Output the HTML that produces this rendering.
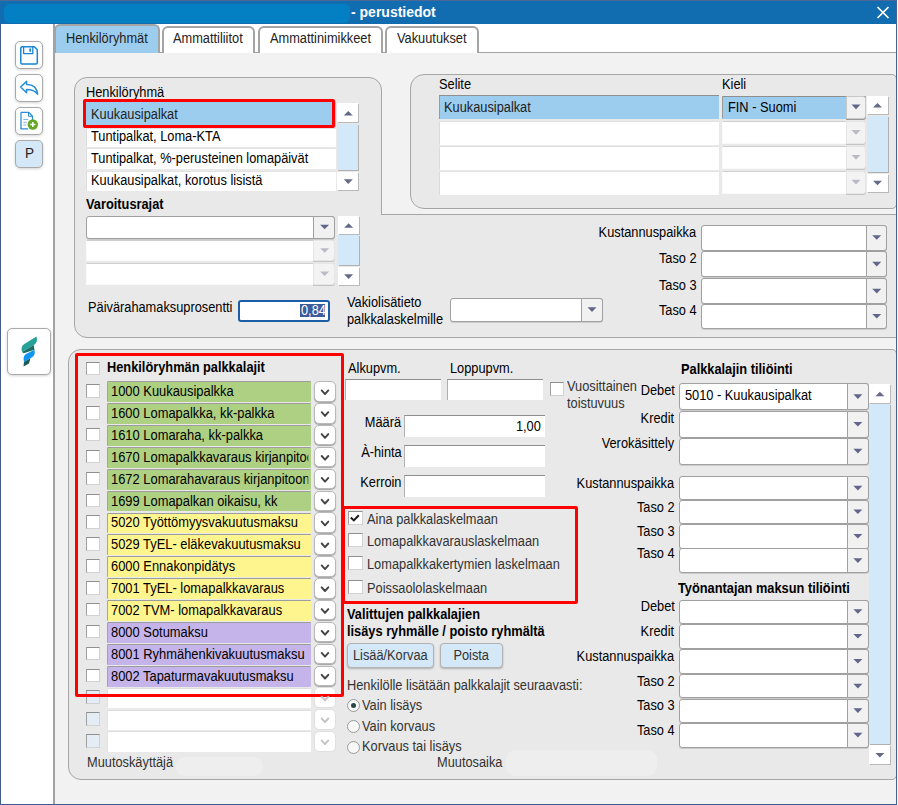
<!DOCTYPE html>
<html lang="fi"><head><meta charset="utf-8"><title>perustiedot</title><style>
html,body{margin:0;padding:0;}
body{width:898px;height:805px;overflow:hidden;position:relative;background:#fff;font-family:"Liberation Sans",sans-serif;font-size:13.8px;color:#000;}
.a,.t,.tab,.tbtn,.lrow,.red,.combo,.cbtn,.sbtn,.strack,.chk,.bar,.dd,.inp,.btn,.radio{position:absolute;box-sizing:border-box;}
.t{white-space:nowrap;transform:scaleX(0.9275);transform-origin:0 50%;}
.t.r{transform-origin:100% 50%;}
.t.ns{transform:none;}
.b{font-weight:bold;}
.tab{border:2px solid #a4a4a4;border-radius:6px 6px 0 0;}
.tbtn{border:1px solid #a9a9a9;border-radius:5px;box-shadow:0 1px 3px rgba(0,0,0,.18);}
.lrow{background:#fff;border-radius:1px;border-top:1px solid #e2e2e2;border-left:1px solid #dcdcdc;}
.red{border:3px solid #fe0000;border-radius:2px;}
.combo{border:1px solid #a0a0a0;border-radius:3px;box-shadow:0 1px 0 rgba(0,0,0,.12);}
.combo.dis{border-color:#fafafa;border-top-color:#cfcfcf;box-shadow:none;border-radius:1px;}
.combo.sel{border-color:#9dcdee;border-top-color:#8f8f8f;border-left-color:#9a9a9a;box-shadow:none;border-radius:1px;}
.cbtn.sel{border-color:#c9c9c9;box-shadow:0 1px 0 #999;}
.cbtn{background:#f1f1f1;border:1px solid #a0a0a0;border-radius:0 3px 3px 0;}
.cbtn.dis{border-color:#e6e6e6;background:#f3f3f3;box-shadow:0 1px 0 #c4c4c4;}
.sbtn{background:#fff;box-shadow:1px 1px 0 #b9b9b9;}
.strack{background:#d3e8f8;box-shadow:1px 1px 0 #b0b0b0;}
.chk{background:#fff;border:1px solid #d2d2d2;border-top-color:#909090;border-left-color:#a0a0a0;}
.chk.blue{background:#e4ecf6;}
.bar{border-top:1px solid #9c9c9c;border-left:1px solid #a4a4a4;overflow:hidden;white-space:nowrap;border-radius:1px;}
.bar span{position:absolute;left:2.8px;top:1.85px;line-height:16px;width:210.6px;overflow:hidden;transform:scaleX(0.935);transform-origin:0 50%;}
.bar.g{background:#aed083;}
.bar.y{background:#fff58f;}
.bar.p{background:#c5b4ea;}
.bar.w{background:#fff;border-top-color:#dedede;border-left-color:#e2e2e2;}
.dd{background:#fff;border:1px solid #b8b8b8;border-radius:5px;box-shadow:0 1px 1px rgba(0,0,0,.3);}
.dd.dis{border-color:#e0e0e0;box-shadow:none;}
.inp{background:#fff;border-top:1px solid #8e8e8e;border-left:1px solid #b0b0b0;}
.btn{background:#d4e8f8;border:1px solid #b3b3b3;border-radius:4px;box-shadow:0 1px 2px rgba(0,0,0,.25);text-align:center;line-height:24px;color:#333;}
.btn span{display:inline-block;transform:scaleX(0.9275);}
.radio{background:#f7f9f7;border:1px solid #9a9a9a;border-radius:50%;}
.radio i{position:absolute;left:3px;top:3px;width:5.4px;height:5.4px;border-radius:50%;background:#2a4648;}
</style></head><body>
<div class="a" style="left:0.00px;top:0.00px;width:896.00px;height:805.00px;background:#fff;"></div>
<div class="a" style="left:0.00px;top:0.00px;width:897.00px;height:24.00px;background:#116db0;"></div>
<div class="a" style="left:0.00px;top:0.00px;width:897.00px;height:1.00px;background:#4d6797;"></div>
<div class="a" style="left:4.00px;top:4.00px;width:345.50px;height:18.50px;background:#0380c4;border-radius:6px;"></div>
<div class="t b ns" style="left:351.00px;top:3.25px;line-height:18px;font-size:14px;color:#fff;">- perustiedot</div>
<svg class="a" style="left:0;top:0" width="898" height="30"><path d="M877.5 7 L888.5 18 M888.5 7 L877.5 18" stroke="#fff" stroke-width="1.7" fill="none"/></svg>
<div class="a" style="left:55.00px;top:53.00px;width:841.00px;height:751.00px;background:#f2f2f2;"></div>
<div class="a" style="left:53.00px;top:24.00px;width:2.00px;height:780.00px;background:#a2a2a2;"></div>
<div class="a" style="left:55.00px;top:52.00px;width:841.00px;height:1.00px;background:#a2a2a2;"></div>
<div class="tab" style="left:54.00px;top:24.20px;width:106.00px;height:28.40px;background:#9dcdee;border-bottom:0;"></div>
<div class="t " style="left:65.60px;top:30.75px;line-height:16px;font-size:13.8px;color:#222;">Henkilöryhmät</div>
<div class="tab" style="left:161.50px;top:26.00px;width:93.60px;height:26.50px;background:#fff;border-bottom:0;"></div>
<div class="t " style="left:173.40px;top:30.75px;line-height:16px;font-size:13.8px;color:#222;">Ammattiliitot</div>
<div class="tab" style="left:257.50px;top:26.00px;width:125.40px;height:26.50px;background:#fff;border-bottom:0;"></div>
<div class="t " style="left:269.60px;top:30.75px;line-height:16px;font-size:13.8px;color:#222;">Ammattinimikkeet</div>
<div class="tab" style="left:384.90px;top:26.00px;width:94.20px;height:26.50px;background:#fff;border-bottom:0;"></div>
<div class="t " style="left:396.70px;top:30.75px;line-height:16px;font-size:13.8px;color:#222;">Vakuutukset</div>
<div class="tbtn" style="left:15.00px;top:41.00px;width:27.50px;height:27.50px;background:#fff;"></div>
<div class="tbtn" style="left:15.00px;top:74.00px;width:27.50px;height:27.50px;background:#fff;"></div>
<div class="tbtn" style="left:15.00px;top:107.00px;width:27.50px;height:27.50px;background:#fff;"></div>
<div class="tbtn" style="left:15.00px;top:140.00px;width:27.50px;height:27.50px;background:#d4e8f8;"></div>
<div class="t " style="left:24.60px;top:145.25px;line-height:16px;font-size:14.6px;color:#222;">P</div>
<div class="tbtn" style="left:7.00px;top:328.00px;width:43.60px;height:47.00px;background:#fff;"></div>
<svg class="a" style="left:0;top:0" width="60" height="400">
<!-- save -->
<g fill="none" stroke="#1787d4" stroke-width="1.5" stroke-linejoin="round">
<path d="M22 46.8 h12.4 l2.9 2.9 v13.1 q0 1.2 -1.2 1.2 h-14.1 q-1.2 0 -1.2 -1.2 v-14.8 q0 -1.2 1.2 -1.2z"/>
<path d="M23.6 47 v6.6 h9.2 v-6.6" stroke-width="1.3"/>
</g>
<rect x="29.3" y="48.5" width="1.7" height="3.2" fill="#1787d4"/>
<!-- undo arrow -->
<path d="M20.6 87 L26.6 81.4 V84.6 C32.6 84.4 36.8 87.6 37.6 94.2 C34.8 90.6 31.6 89.5 26.6 89.6 V92.8 Z" fill="#fff" stroke="#2a8fd8" stroke-width="1.5" stroke-linejoin="round"/>
<!-- new doc -->
<g fill="none" stroke="#2a8fd8" stroke-width="1.3" stroke-linejoin="round">
<path d="M21 112.3 h7.5 l4 4 v4.4 M21 112.3 v16.6 h7.2"/>
<path d="M28.5 112.3 v4 h4" stroke-width="1"/>
</g>
<path d="M23.3 119.5 h5 M23.3 122.3 h3.5 M23.3 125 h3" stroke="#7db8e6" stroke-width="1"/>
<circle cx="32.8" cy="124.5" r="5.2" fill="#64a724"/>
<path d="M32.8 121.9 v5.2 M30.2 124.5 h5.2" stroke="#fff" stroke-width="1.5"/>
<!-- logo -->
<path d="M36.5 336.5 C37.6 340.5 36.8 343.2 33.8 345 L22 352 C21 348.2 21.6 345.8 24.3 344 Z" fill="#27a199"/>
<path d="M22 352 L33.8 345 L34.4 349.7 L23.8 353.2 Z" fill="#1d6f66"/>
<path d="M34.4 349.7 C35.3 353 34.6 355.6 32 357.3 L24 362 C23.2 358.4 23.4 355.6 26 354 Z" fill="#0e95f2"/>
<path d="M24 362 L30.5 358.2 L29 363.5 L23.5 366.5 Z" fill="#1b5a55"/>
</svg>
<div class="a" style="left:73.80px;top:77.00px;width:308.20px;height:260.50px;background:#e9e9e9;border:1px solid #a6a6a6;border-radius:13px 13px 0 13px;box-sizing:border-box;"></div>
<div class="a" style="left:381.00px;top:214.00px;width:515.00px;height:123.50px;background:#e9e9e9;border-top:1px solid #a6a6a6;border-bottom:1px solid #a6a6a6;box-sizing:border-box;"></div>
<div class="a" style="left:409.60px;top:74.00px;width:487.00px;height:134.50px;background:#e9e9e9;border:1px solid #a6a6a6;border-radius:14px 5px 5px 14px;box-sizing:border-box;"></div>
<div class="t " style="left:85.80px;top:84.75px;line-height:16px;font-size:13.8px;">Henkilöryhmä</div>
<div class="a" style="left:86.00px;top:101.00px;width:249.50px;height:25.50px;background:#9dcdee;"></div>
<div class="lrow" style="left:86.00px;top:128.30px;width:249.50px;height:18.70px;"></div>
<div class="lrow" style="left:86.00px;top:148.30px;width:249.50px;height:20.70px;"></div>
<div class="lrow" style="left:86.00px;top:170.70px;width:249.50px;height:20.30px;"></div>
<div class="t " style="left:91.00px;top:106.75px;line-height:16px;font-size:13.8px;color:#222;">Kuukausipalkat</div>
<div class="t " style="left:91.00px;top:128.75px;line-height:16px;font-size:13.8px;">Tuntipalkat, Loma-KTA</div>
<div class="t " style="left:91.00px;top:150.75px;line-height:16px;font-size:13.8px;">Tuntipalkat, %-perusteinen lomapäivät</div>
<div class="t " style="left:91.00px;top:172.75px;line-height:16px;font-size:13.8px;">Kuukausipalkat, korotus lisistä</div>
<div class="red" style="left:83.00px;top:99.00px;width:252.20px;height:29.10px;"></div>
<div class="sbtn" style="left:337.40px;top:103.40px;width:21.10px;height:18.80px;"></div>
<div class="strack" style="left:337.40px;top:123.80px;width:21.10px;height:46.30px;"></div>
<div class="sbtn" style="left:337.40px;top:171.70px;width:21.10px;height:18.80px;"></div>
<div class="t b" style="left:86.00px;top:196.75px;line-height:16px;font-size:13.8px;">Varoitusrajat</div>
<div class="combo" style="left:86.00px;top:216.00px;width:249.30px;height:22.70px;background:#fff;"></div>
<div class="cbtn" style="left:313.20px;top:216.00px;width:22.10px;height:22.70px;"></div>
<div class="combo dis" style="left:86.00px;top:240.30px;width:249.30px;height:21.10px;background:#fff;"></div>
<div class="cbtn dis" style="left:313.20px;top:240.30px;width:22.10px;height:21.10px;"></div>
<div class="combo dis" style="left:86.00px;top:263.00px;width:249.30px;height:22.20px;background:#fff;"></div>
<div class="cbtn dis" style="left:313.20px;top:263.00px;width:22.10px;height:22.20px;"></div>
<div class="sbtn" style="left:337.80px;top:216.00px;width:21.00px;height:18.00px;"></div>
<div class="strack" style="left:337.80px;top:235.40px;width:21.00px;height:30.00px;"></div>
<div class="sbtn" style="left:337.80px;top:266.80px;width:21.00px;height:18.60px;"></div>
<div class="t " style="left:88.00px;top:299.75px;line-height:16px;font-size:13.8px;">Päivärahamaksuprosentti</div>
<div class="a" style="left:238.00px;top:299.70px;width:92.00px;height:22.50px;background:#fff;border:2px solid #1c5ea6;border-radius:3px;box-sizing:border-box;"></div>
<div class="a" style="left:300.20px;top:304.20px;width:25.00px;height:12.80px;background:#3c5c9c;"></div>
<div class="t " style="left:301.20px;top:302.75px;line-height:16px;font-size:13.8px;color:#fff;">0,84</div>
<div class="t " style="left:347.40px;top:294.75px;line-height:16px;font-size:13.8px;">Vakiolisätieto</div>
<div class="t " style="left:347.40px;top:311.75px;line-height:16px;font-size:13.8px;">palkkalaskelmille</div>
<div class="combo" style="left:450.00px;top:297.80px;width:153.00px;height:24.20px;background:#fff;"></div>
<div class="cbtn" style="left:580.50px;top:297.80px;width:22.50px;height:24.20px;"></div>
<div class="t " style="left:439.00px;top:76.75px;line-height:16px;font-size:13.8px;">Selite</div>
<div class="t " style="left:721.60px;top:76.75px;line-height:16px;font-size:13.8px;">Kieli</div>
<div class="a" style="left:439.40px;top:95.00px;width:279.40px;height:24.00px;background:#9dcdee;border-top:1px solid #8f8f8f;border-left:1px solid #9a9a9a;"></div>
<div class="lrow" style="left:439.40px;top:120.60px;width:279.40px;height:24.00px;background:#fff;"></div>
<div class="lrow" style="left:439.40px;top:146.00px;width:279.40px;height:24.00px;background:#fff;"></div>
<div class="lrow" style="left:439.40px;top:171.20px;width:279.40px;height:23.80px;background:#fff;"></div>
<div class="t " style="left:444.00px;top:99.75px;line-height:16px;font-size:13.8px;color:#222;">Kuukausipalkat</div>
<div class="combo sel" style="left:721.60px;top:95.60px;width:144.20px;height:23.20px;background:#9dcdee;"></div>
<div class="cbtn sel" style="left:845.70px;top:95.60px;width:20.10px;height:23.20px;"></div>
<div class="t " style="left:727.60px;top:99.75px;line-height:16px;font-size:13.8px;">FIN - Suomi</div>
<div class="combo dis" style="left:721.60px;top:121.30px;width:144.20px;height:22.70px;background:#fff;"></div>
<div class="cbtn dis" style="left:845.70px;top:121.30px;width:20.10px;height:22.70px;"></div>
<div class="combo dis" style="left:721.60px;top:146.00px;width:144.20px;height:23.00px;background:#fff;"></div>
<div class="cbtn dis" style="left:845.70px;top:146.00px;width:20.10px;height:23.00px;"></div>
<div class="combo dis" style="left:721.60px;top:171.00px;width:144.20px;height:22.80px;background:#fff;"></div>
<div class="cbtn dis" style="left:845.70px;top:171.00px;width:20.10px;height:22.80px;"></div>
<div class="sbtn" style="left:867.00px;top:95.60px;width:20.50px;height:18.40px;"></div>
<div class="strack" style="left:867.00px;top:115.60px;width:20.50px;height:56.30px;"></div>
<div class="sbtn" style="left:867.00px;top:173.50px;width:20.50px;height:18.00px;"></div>
<div class="t r " style="right:201.50px;top:224.75px;line-height:16px;font-size:13.8px;">Kustannuspaikka</div>
<div class="t r " style="right:201.50px;top:250.75px;line-height:16px;font-size:13.8px;">Taso 2</div>
<div class="t r " style="right:201.50px;top:277.75px;line-height:16px;font-size:13.8px;">Taso 3</div>
<div class="t r " style="right:201.50px;top:302.75px;line-height:16px;font-size:13.8px;">Taso 4</div>
<div class="combo" style="left:701.00px;top:225.00px;width:186.40px;height:25.60px;background:#fff;"></div>
<div class="cbtn" style="left:865.50px;top:225.00px;width:21.90px;height:25.60px;"></div>
<div class="combo" style="left:701.00px;top:251.40px;width:186.40px;height:26.00px;background:#fff;"></div>
<div class="cbtn" style="left:865.50px;top:251.40px;width:21.90px;height:26.00px;"></div>
<div class="combo" style="left:701.00px;top:278.40px;width:186.40px;height:26.00px;background:#fff;"></div>
<div class="cbtn" style="left:865.50px;top:278.40px;width:21.90px;height:26.00px;"></div>
<div class="combo" style="left:701.00px;top:304.20px;width:186.40px;height:24.60px;background:#fff;"></div>
<div class="cbtn" style="left:865.50px;top:304.20px;width:21.90px;height:24.60px;"></div>
<div class="a" style="left:67.90px;top:349.40px;width:828.70px;height:430.60px;background:#e9e9e9;border:1px solid #a6a6a6;border-radius:13px 5px 5px 13px;box-sizing:border-box;"></div>
<div class="chk" style="left:86.20px;top:362.20px;width:13.80px;height:13.00px;"></div>
<div class="t b" style="left:107.00px;top:359.75px;line-height:16px;font-size:13.8px;">Henkilöryhmän palkkalajit</div>
<div class="chk" style="left:86.20px;top:384.10px;width:13.80px;height:13.60px;"></div>
<div class="bar g" style="left:107.40px;top:381.30px;width:203.90px;height:20.80px;"><span>1000 Kuukausipalkka</span></div>
<div class="dd" style="left:314.00px;top:381.10px;width:21.80px;height:20.60px;"></div>
<div class="chk" style="left:86.20px;top:405.98px;width:13.80px;height:13.60px;"></div>
<div class="bar g" style="left:107.40px;top:403.18px;width:203.90px;height:20.80px;"><span>1600 Lomapalkka, kk-palkka</span></div>
<div class="dd" style="left:314.00px;top:402.98px;width:21.80px;height:20.60px;"></div>
<div class="chk" style="left:86.20px;top:427.86px;width:13.80px;height:13.60px;"></div>
<div class="bar g" style="left:107.40px;top:425.06px;width:203.90px;height:20.80px;"><span>1610 Lomaraha, kk-palkka</span></div>
<div class="dd" style="left:314.00px;top:424.86px;width:21.80px;height:20.60px;"></div>
<div class="chk" style="left:86.20px;top:449.74px;width:13.80px;height:13.60px;"></div>
<div class="bar g" style="left:107.40px;top:446.94px;width:203.90px;height:20.80px;"><span>1670 Lomapalkkavaraus kirjanpitoon</span></div>
<div class="dd" style="left:314.00px;top:446.74px;width:21.80px;height:20.60px;"></div>
<div class="chk" style="left:86.20px;top:471.62px;width:13.80px;height:13.60px;"></div>
<div class="bar g" style="left:107.40px;top:468.82px;width:203.90px;height:20.80px;"><span>1672 Lomarahavaraus kirjanpitoon</span></div>
<div class="dd" style="left:314.00px;top:468.62px;width:21.80px;height:20.60px;"></div>
<div class="chk" style="left:86.20px;top:493.50px;width:13.80px;height:13.60px;"></div>
<div class="bar g" style="left:107.40px;top:490.70px;width:203.90px;height:20.80px;"><span>1699 Lomapalkan oikaisu, kk</span></div>
<div class="dd" style="left:314.00px;top:490.50px;width:21.80px;height:20.60px;"></div>
<div class="chk" style="left:86.20px;top:515.38px;width:13.80px;height:13.60px;"></div>
<div class="bar y" style="left:107.40px;top:512.58px;width:203.90px;height:20.80px;"><span>5020 Työttömyysvakuutusmaksu</span></div>
<div class="dd" style="left:314.00px;top:512.38px;width:21.80px;height:20.60px;"></div>
<div class="chk" style="left:86.20px;top:537.26px;width:13.80px;height:13.60px;"></div>
<div class="bar y" style="left:107.40px;top:534.46px;width:203.90px;height:20.80px;"><span>5029 TyEL- eläkevakuutusmaksu</span></div>
<div class="dd" style="left:314.00px;top:534.26px;width:21.80px;height:20.60px;"></div>
<div class="chk" style="left:86.20px;top:559.14px;width:13.80px;height:13.60px;"></div>
<div class="bar y" style="left:107.40px;top:556.34px;width:203.90px;height:20.80px;"><span>6000 Ennakonpidätys</span></div>
<div class="dd" style="left:314.00px;top:556.14px;width:21.80px;height:20.60px;"></div>
<div class="chk" style="left:86.20px;top:581.02px;width:13.80px;height:13.60px;"></div>
<div class="bar y" style="left:107.40px;top:578.22px;width:203.90px;height:20.80px;"><span>7001 TyEL- lomapalkkavaraus</span></div>
<div class="dd" style="left:314.00px;top:578.02px;width:21.80px;height:20.60px;"></div>
<div class="chk" style="left:86.20px;top:602.90px;width:13.80px;height:13.60px;"></div>
<div class="bar y" style="left:107.40px;top:600.10px;width:203.90px;height:20.80px;"><span>7002 TVM- lomapalkkavaraus</span></div>
<div class="dd" style="left:314.00px;top:599.90px;width:21.80px;height:20.60px;"></div>
<div class="chk" style="left:86.20px;top:624.78px;width:13.80px;height:13.60px;"></div>
<div class="bar p" style="left:107.40px;top:621.98px;width:203.90px;height:20.80px;"><span>8000 Sotumaksu</span></div>
<div class="dd" style="left:314.00px;top:621.78px;width:21.80px;height:20.60px;"></div>
<div class="chk" style="left:86.20px;top:646.66px;width:13.80px;height:13.60px;"></div>
<div class="bar p" style="left:107.40px;top:643.86px;width:203.90px;height:20.80px;"><span>8001 Ryhmähenkivakuutusmaksu</span></div>
<div class="dd" style="left:314.00px;top:643.66px;width:21.80px;height:20.60px;"></div>
<div class="chk" style="left:86.20px;top:668.54px;width:13.80px;height:13.60px;"></div>
<div class="bar p" style="left:107.40px;top:665.74px;width:203.90px;height:20.80px;"><span>8002 Tapaturmavakuutusmaksu</span></div>
<div class="dd" style="left:314.00px;top:665.54px;width:21.80px;height:20.60px;"></div>
<div class="chk blue" style="left:86.20px;top:690.42px;width:13.80px;height:13.60px;"></div>
<div class="bar w" style="left:107.40px;top:687.62px;width:203.90px;height:20.80px;"></div>
<div class="dd dis" style="left:314.00px;top:687.42px;width:21.80px;height:20.60px;"></div>
<div class="chk blue" style="left:86.20px;top:712.30px;width:13.80px;height:13.60px;"></div>
<div class="bar w" style="left:107.40px;top:709.50px;width:203.90px;height:20.80px;"></div>
<div class="dd dis" style="left:314.00px;top:709.30px;width:21.80px;height:20.60px;"></div>
<div class="chk blue" style="left:86.20px;top:734.18px;width:13.80px;height:13.60px;"></div>
<div class="bar w" style="left:107.40px;top:731.38px;width:203.90px;height:20.80px;"></div>
<div class="dd dis" style="left:314.00px;top:731.18px;width:21.80px;height:20.60px;"></div>
<div class="red" style="left:74.60px;top:352.50px;width:269.50px;height:344.30px;"></div>
<div class="t " style="left:348.40px;top:360.75px;line-height:16px;font-size:13.8px;">Alkupvm.</div>
<div class="t " style="left:450.00px;top:360.75px;line-height:16px;font-size:13.8px;">Loppupvm.</div>
<div class="inp" style="left:345.20px;top:378.60px;width:96.10px;height:21.40px;"></div>
<div class="inp" style="left:447.00px;top:378.60px;width:95.80px;height:21.40px;"></div>
<div class="chk" style="left:550.20px;top:382.00px;width:14.00px;height:14.00px;"></div>
<div class="t " style="left:567.00px;top:378.75px;line-height:16px;font-size:13.8px;color:#333;">Vuosittainen</div>
<div class="t " style="left:567.40px;top:395.75px;line-height:16px;font-size:13.8px;color:#333;">toistuvuus</div>
<div class="t r " style="right:496.50px;top:414.75px;line-height:16px;font-size:13.8px;">Määrä</div>
<div class="inp" style="left:403.60px;top:414.80px;width:141.00px;height:22.70px;"></div>
<div class="t r " style="right:496.50px;top:444.75px;line-height:16px;font-size:13.8px;">À-hinta</div>
<div class="inp" style="left:403.60px;top:444.80px;width:141.00px;height:22.50px;"></div>
<div class="t r " style="right:496.50px;top:474.75px;line-height:16px;font-size:13.8px;">Kerroin</div>
<div class="inp" style="left:403.60px;top:475.00px;width:141.00px;height:22.30px;"></div>
<div class="t r " style="right:357.20px;top:418.75px;line-height:16px;font-size:13.8px;">1,00</div>
<div class="red" style="left:341.80px;top:505.90px;width:236.40px;height:98.40px;"></div>
<div class="chk" style="left:347.80px;top:511.00px;width:15.20px;height:13.80px;"></div>
<div class="t " style="left:367.20px;top:511.75px;line-height:16px;font-size:13.8px;color:#333;">Aina palkkalaskelmaan</div>
<div class="chk" style="left:347.80px;top:532.80px;width:15.20px;height:13.80px;"></div>
<div class="t " style="left:367.20px;top:533.75px;line-height:16px;font-size:13.8px;color:#333;">Lomapalkkavarauslaskelmaan</div>
<div class="chk" style="left:347.80px;top:556.00px;width:15.20px;height:13.80px;"></div>
<div class="t " style="left:367.20px;top:556.75px;line-height:16px;font-size:13.8px;color:#333;">Lomapalkkakertymien laskelmaan</div>
<div class="chk" style="left:347.80px;top:580.00px;width:15.20px;height:13.80px;"></div>
<div class="t " style="left:367.20px;top:580.75px;line-height:16px;font-size:13.8px;color:#333;">Poissaololaskelmaan</div>
<div class="t b" style="left:347.40px;top:606.75px;line-height:16px;font-size:13.8px;">Valittujen palkkalajien</div>
<div class="t b" style="left:347.40px;top:623.75px;line-height:16px;font-size:13.8px;">lisäys ryhmälle / poisto ryhmältä</div>
<div class="btn" style="left:347.20px;top:643.20px;width:86.60px;height:24.40px;"><span>Lisää/Korvaa</span></div>
<div class="btn" style="left:440.30px;top:643.20px;width:62.70px;height:24.40px;"><span>Poista</span></div>
<div class="t " style="left:347.40px;top:677.75px;line-height:16px;font-size:13.8px;color:#333;">Henkilölle lisätään palkkalajit seuraavasti:</div>
<div class="radio" style="left:346.90px;top:698.80px;width:13.00px;height:13.00px;"><i></i></div>
<div class="t " style="left:361.80px;top:697.75px;line-height:16px;font-size:13.8px;color:#333;">Vain lisäys</div>
<div class="radio" style="left:346.90px;top:719.80px;width:13.00px;height:13.00px;"></div>
<div class="t " style="left:361.80px;top:718.75px;line-height:16px;font-size:13.8px;color:#333;">Vain korvaus</div>
<div class="radio" style="left:346.90px;top:740.60px;width:13.00px;height:13.00px;"></div>
<div class="t " style="left:361.80px;top:738.75px;line-height:16px;font-size:13.8px;color:#333;">Korvaus tai lisäys</div>
<div class="t " style="left:436.90px;top:754.75px;line-height:16px;font-size:13.8px;color:#333;">Muutosaika</div>
<div class="a" style="left:506.00px;top:750.00px;width:151.00px;height:25.60px;background:#eeeeee;border-radius:9px;"></div>
<div class="t " style="left:87.30px;top:754.75px;line-height:16px;font-size:13.8px;color:#333;">Muutoskäyttäjä</div>
<div class="a" style="left:175.60px;top:757.00px;width:87.80px;height:18.60px;background:#eeeeee;border-radius:9px;"></div>
<div class="t b" style="left:680.50px;top:361.75px;line-height:16px;font-size:13.8px;">Palkkalajin tiliöinti</div>
<div class="t r " style="right:223.50px;top:382.75px;line-height:16px;font-size:13.8px;">Debet</div>
<div class="combo" style="left:679.20px;top:383.40px;width:189.40px;height:27.00px;background:#fff;"></div>
<div class="cbtn" style="left:846.60px;top:383.40px;width:22.00px;height:27.00px;"></div>
<div class="t " style="left:685.20px;top:387.75px;line-height:16px;font-size:13.8px;">5010 - Kuukausipalkat</div>
<div class="t r " style="right:223.50px;top:410.75px;line-height:16px;font-size:13.8px;">Kredit</div>
<div class="combo" style="left:679.20px;top:411.20px;width:189.40px;height:26.80px;background:#fff;"></div>
<div class="cbtn" style="left:846.60px;top:411.20px;width:22.00px;height:26.80px;"></div>
<div class="t r " style="right:223.50px;top:435.75px;line-height:16px;font-size:13.8px;">Verokäsittely</div>
<div class="combo" style="left:679.20px;top:438.20px;width:189.40px;height:26.40px;background:#fff;"></div>
<div class="cbtn" style="left:846.60px;top:438.20px;width:22.00px;height:26.40px;"></div>
<div class="t r " style="right:223.50px;top:475.75px;line-height:16px;font-size:13.8px;">Kustannuspaikka</div>
<div class="combo" style="left:679.20px;top:476.40px;width:189.40px;height:24.00px;background:#fff;"></div>
<div class="cbtn" style="left:846.60px;top:476.40px;width:22.00px;height:24.00px;"></div>
<div class="t r " style="right:223.50px;top:499.75px;line-height:16px;font-size:13.8px;">Taso 2</div>
<div class="combo" style="left:679.20px;top:500.40px;width:189.40px;height:23.40px;background:#fff;"></div>
<div class="cbtn" style="left:846.60px;top:500.40px;width:22.00px;height:23.40px;"></div>
<div class="t r " style="right:223.50px;top:523.75px;line-height:16px;font-size:13.8px;">Taso 3</div>
<div class="combo" style="left:679.20px;top:524.20px;width:189.40px;height:24.60px;background:#fff;"></div>
<div class="cbtn" style="left:846.60px;top:524.20px;width:22.00px;height:24.60px;"></div>
<div class="t r " style="right:223.50px;top:545.75px;line-height:16px;font-size:13.8px;">Taso 4</div>
<div class="combo" style="left:679.20px;top:548.40px;width:189.40px;height:25.00px;background:#fff;"></div>
<div class="cbtn" style="left:846.60px;top:548.40px;width:22.00px;height:25.00px;"></div>
<div class="t b" style="left:678.00px;top:580.75px;line-height:16px;font-size:13.8px;">Työnantajan maksun tiliöinti</div>
<div class="t r " style="right:223.50px;top:598.75px;line-height:16px;font-size:13.8px;">Debet</div>
<div class="combo" style="left:679.20px;top:599.80px;width:189.40px;height:24.00px;background:#fff;"></div>
<div class="cbtn" style="left:846.60px;top:599.80px;width:22.00px;height:24.00px;"></div>
<div class="t r " style="right:223.50px;top:623.75px;line-height:16px;font-size:13.8px;">Kredit</div>
<div class="combo" style="left:679.20px;top:624.40px;width:189.40px;height:24.40px;background:#fff;"></div>
<div class="cbtn" style="left:846.60px;top:624.40px;width:22.00px;height:24.40px;"></div>
<div class="t r " style="right:223.50px;top:648.75px;line-height:16px;font-size:13.8px;">Kustannuspaikka</div>
<div class="combo" style="left:679.20px;top:649.40px;width:189.40px;height:24.40px;background:#fff;"></div>
<div class="cbtn" style="left:846.60px;top:649.40px;width:22.00px;height:24.40px;"></div>
<div class="t r " style="right:223.50px;top:673.75px;line-height:16px;font-size:13.8px;">Taso 2</div>
<div class="combo" style="left:679.20px;top:674.20px;width:189.40px;height:24.30px;background:#fff;"></div>
<div class="cbtn" style="left:846.60px;top:674.20px;width:22.00px;height:24.30px;"></div>
<div class="t r " style="right:223.50px;top:697.75px;line-height:16px;font-size:13.8px;">Taso 3</div>
<div class="combo" style="left:679.20px;top:698.60px;width:189.40px;height:24.60px;background:#fff;"></div>
<div class="cbtn" style="left:846.60px;top:698.60px;width:22.00px;height:24.60px;"></div>
<div class="t r " style="right:223.50px;top:722.75px;line-height:16px;font-size:13.8px;">Taso 4</div>
<div class="combo" style="left:679.20px;top:723.20px;width:189.40px;height:24.40px;background:#fff;"></div>
<div class="cbtn" style="left:846.60px;top:723.20px;width:22.00px;height:24.40px;"></div>
<div class="sbtn" style="left:869.30px;top:384.00px;width:20.70px;height:19.00px;"></div>
<div class="strack" style="left:869.30px;top:403.80px;width:20.70px;height:340.60px;"></div>
<div class="sbtn" style="left:869.30px;top:745.20px;width:20.70px;height:19.20px;"></div>
<div class="a" style="left:0.00px;top:24.00px;width:1.00px;height:781.00px;background:#3f5c8f;"></div>
<div class="a" style="left:0.00px;top:803.50px;width:897.00px;height:1.50px;background:#3f5c8f;"></div>
<div class="a" style="left:896.00px;top:0.00px;width:1.00px;height:805.00px;background:#46628f;"></div>
<div class="a" style="left:897.00px;top:0.00px;width:1.00px;height:805.00px;background:#f4f6fa;"></div>
<svg class="a" style="left:0;top:0;pointer-events:none" width="898" height="805"><polygon points="343.8,115.6 352.8,115.6 348.2,111.0" fill="#666987"/><polygon points="343.8,179.3 352.8,179.3 348.2,183.9" fill="#666987"/><polygon points="320.1,224.7 329.1,224.7 324.6,229.3" fill="#62668a"/><polygon points="320.1,248.2 329.1,248.2 324.6,252.8" fill="#b9bac6"/><polygon points="320.1,271.5 329.1,271.5 324.6,276.1" fill="#b9bac6"/><polygon points="344.1,227.8 353.1,227.8 348.6,223.2" fill="#666987"/><polygon points="344.1,274.3 353.1,274.3 348.6,278.9" fill="#666987"/><polygon points="587.5,307.3 596.5,307.3 592.0,311.9" fill="#62668a"/><polygon points="851.5,104.6 860.5,104.6 856.0,109.2" fill="#62668a"/><polygon points="851.5,130.0 860.5,130.0 856.0,134.7" fill="#b9bac6"/><polygon points="851.5,154.9 860.5,154.9 856.0,159.5" fill="#b9bac6"/><polygon points="851.5,179.8 860.5,179.8 856.0,184.4" fill="#b9bac6"/><polygon points="873.0,107.6 882.0,107.6 877.5,103.0" fill="#666987"/><polygon points="873.0,180.7 882.0,180.7 877.5,185.3" fill="#666987"/><polygon points="872.2,235.2 881.2,235.2 876.8,239.8" fill="#62668a"/><polygon points="872.2,261.8 881.2,261.8 876.8,266.4" fill="#62668a"/><polygon points="872.2,288.8 881.2,288.8 876.8,293.4" fill="#62668a"/><polygon points="872.2,313.9 881.2,313.9 876.8,318.5" fill="#62668a"/><polygon points="853.4,394.3 862.4,394.3 857.9,398.9" fill="#62668a"/><polygon points="853.4,422.0 862.4,422.0 857.9,426.6" fill="#62668a"/><polygon points="853.4,448.8 862.4,448.8 857.9,453.4" fill="#62668a"/><polygon points="853.4,485.8 862.4,485.8 857.9,490.4" fill="#62668a"/><polygon points="853.4,509.5 862.4,509.5 857.9,514.1" fill="#62668a"/><polygon points="853.4,533.9 862.4,533.9 857.9,538.5" fill="#62668a"/><polygon points="853.4,558.3 862.4,558.3 857.9,562.9" fill="#62668a"/><polygon points="853.4,609.2 862.4,609.2 857.9,613.8" fill="#62668a"/><polygon points="853.4,634.0 862.4,634.0 857.9,638.6" fill="#62668a"/><polygon points="853.4,659.0 862.4,659.0 857.9,663.6" fill="#62668a"/><polygon points="853.4,683.8 862.4,683.8 857.9,688.4" fill="#62668a"/><polygon points="853.4,708.3 862.4,708.3 857.9,712.9" fill="#62668a"/><polygon points="853.4,732.8 862.4,732.8 857.9,737.4" fill="#62668a"/><polygon points="875.4,396.3 884.4,396.3 879.9,391.7" fill="#666987"/><polygon points="875.4,753.0 884.4,753.0 879.9,757.6" fill="#666987"/><polyline points="321.7,390.4 325.0,394.1 328.3,390.4" fill="none" stroke="#444" stroke-width="1.9" stroke-linecap="round" stroke-linejoin="round"/><polyline points="321.7,412.2 325.0,415.9 328.3,412.2" fill="none" stroke="#444" stroke-width="1.9" stroke-linecap="round" stroke-linejoin="round"/><polyline points="321.7,434.1 325.0,437.8 328.3,434.1" fill="none" stroke="#444" stroke-width="1.9" stroke-linecap="round" stroke-linejoin="round"/><polyline points="321.7,456.0 325.0,459.7 328.3,456.0" fill="none" stroke="#444" stroke-width="1.9" stroke-linecap="round" stroke-linejoin="round"/><polyline points="321.7,477.9 325.0,481.6 328.3,477.9" fill="none" stroke="#444" stroke-width="1.9" stroke-linecap="round" stroke-linejoin="round"/><polyline points="321.7,499.8 325.0,503.5 328.3,499.8" fill="none" stroke="#444" stroke-width="1.9" stroke-linecap="round" stroke-linejoin="round"/><polyline points="321.7,521.6 325.0,525.3 328.3,521.6" fill="none" stroke="#444" stroke-width="1.9" stroke-linecap="round" stroke-linejoin="round"/><polyline points="321.7,543.5 325.0,547.2 328.3,543.5" fill="none" stroke="#444" stroke-width="1.9" stroke-linecap="round" stroke-linejoin="round"/><polyline points="321.7,565.4 325.0,569.1 328.3,565.4" fill="none" stroke="#444" stroke-width="1.9" stroke-linecap="round" stroke-linejoin="round"/><polyline points="321.7,587.3 325.0,591.0 328.3,587.3" fill="none" stroke="#444" stroke-width="1.9" stroke-linecap="round" stroke-linejoin="round"/><polyline points="321.7,609.1 325.0,612.9 328.3,609.1" fill="none" stroke="#444" stroke-width="1.9" stroke-linecap="round" stroke-linejoin="round"/><polyline points="321.7,631.0 325.0,634.7 328.3,631.0" fill="none" stroke="#444" stroke-width="1.9" stroke-linecap="round" stroke-linejoin="round"/><polyline points="321.7,652.9 325.0,656.6 328.3,652.9" fill="none" stroke="#444" stroke-width="1.9" stroke-linecap="round" stroke-linejoin="round"/><polyline points="321.7,674.8 325.0,678.5 328.3,674.8" fill="none" stroke="#444" stroke-width="1.9" stroke-linecap="round" stroke-linejoin="round"/><polyline points="321.7,696.7 325.0,700.4 328.3,696.7" fill="none" stroke="#c4c4c4" stroke-width="1.9" stroke-linecap="round" stroke-linejoin="round"/><polyline points="321.7,718.5 325.0,722.2 328.3,718.5" fill="none" stroke="#c4c4c4" stroke-width="1.9" stroke-linecap="round" stroke-linejoin="round"/><polyline points="321.7,740.4 325.0,744.1 328.3,740.4" fill="none" stroke="#c4c4c4" stroke-width="1.9" stroke-linecap="round" stroke-linejoin="round"/><polyline points="350.8,517.6 353.8,520.4 358.8,515.2" fill="none" stroke="#1c1c1c" stroke-width="2.1"/></svg>
</body></html>
